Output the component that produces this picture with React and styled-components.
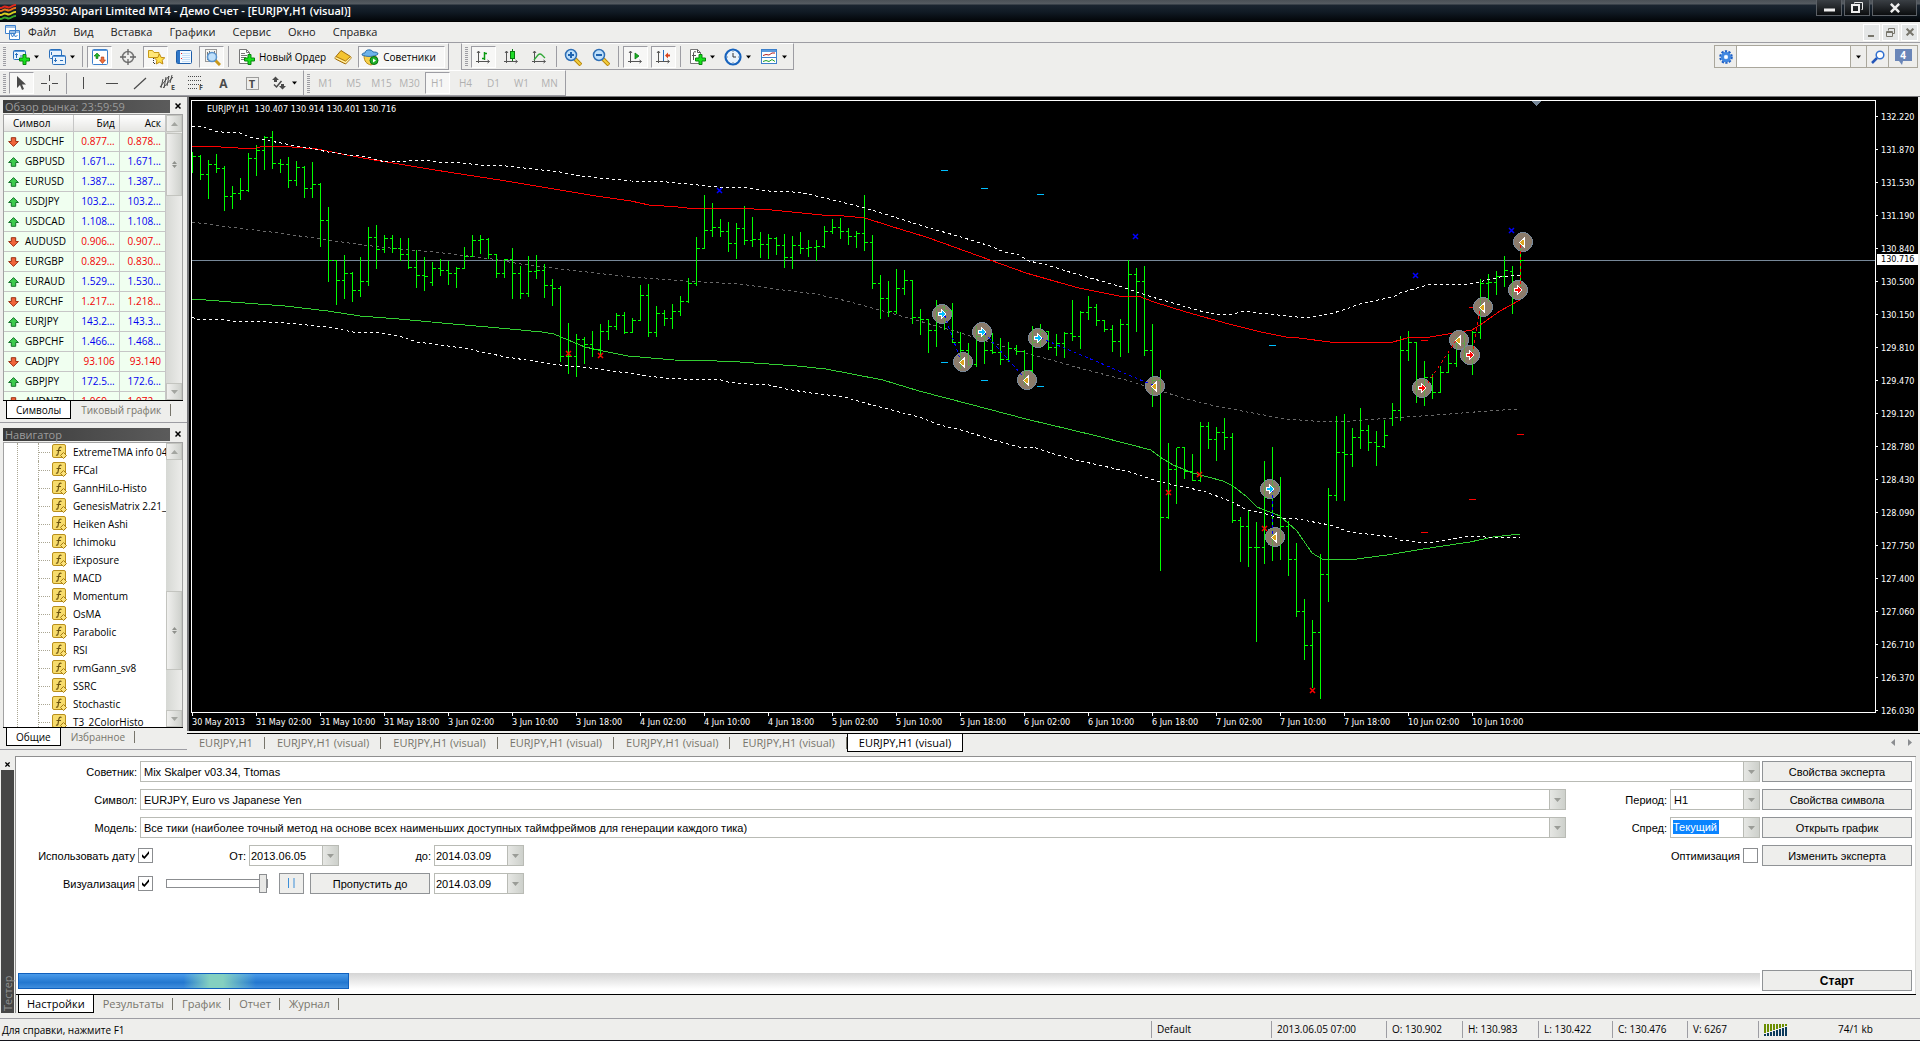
import React from "react";
import styled, { createGlobalStyle } from "styled-components";

const GlobalStyle = createGlobalStyle`
  * {
    box-sizing: border-box;
  }
  body {
    margin: 0;
    background: #eeeeec;
    color: #000;
    font-family: "Open Sans", "Noto Sans", sans-serif;
    font-size: 10px;
  }
  button, input, select {
    font: inherit;
    color: inherit;
    border-radius: 0;
  }
  button {
    padding: 0;
  }
`;

/* ---------- data ---------- */

const menu = ["Файл", "Вид", "Вставка", "Графики", "Сервис", "Окно", "Справка"];

const quotes = [
  ["USDCHF", "0.877...", "0.878...", "down"],
  ["GBPUSD", "1.671...", "1.671...", "up"],
  ["EURUSD", "1.387...", "1.387...", "up"],
  ["USDJPY", "103.2...", "103.2...", "up"],
  ["USDCAD", "1.108...", "1.108...", "up"],
  ["AUDUSD", "0.906...", "0.907...", "down"],
  ["EURGBP", "0.829...", "0.830...", "down"],
  ["EURAUD", "1.529...", "1.530...", "up"],
  ["EURCHF", "1.217...", "1.218...", "down"],
  ["EURJPY", "143.2...", "143.3...", "up"],
  ["GBPCHF", "1.466...", "1.468...", "up"],
  ["CADJPY", "93.106", "93.140", "down"],
  ["GBPJPY", "172.5...", "172.6...", "up"],
  ["AUDNZD", "1.069...", "1.072...", "down"],
];

const indicators = [
  "ExtremeTMA info 04",
  "FFCal",
  "GannHiLo-Histo",
  "GenesisMatrix 2.21_",
  "Heiken Ashi",
  "Ichimoku",
  "iExposure",
  "MACD",
  "Momentum",
  "OsMA",
  "Parabolic",
  "RSI",
  "rvmGann_sv8",
  "SSRC",
  "Stochastic",
  "T3_2ColorHisto",
];

const timeframes = ["M1", "M5", "M15", "M30", "H1", "H4", "D1", "W1", "MN"];

const prices = [
  "132.220", "131.870", "131.530", "131.190", "130.840", "130.500", "130.150",
  "129.810", "129.470", "129.120", "128.780", "128.430", "128.090", "127.750",
  "127.400", "127.060", "126.710", "126.370", "126.030",
];

const times = [
  "30 May 2013", "31 May 02:00", "31 May 10:00", "31 May 18:00",
  "3 Jun 02:00", "3 Jun 10:00", "3 Jun 18:00",
  "4 Jun 02:00", "4 Jun 10:00", "4 Jun 18:00",
  "5 Jun 02:00", "5 Jun 10:00", "5 Jun 18:00",
  "6 Jun 02:00", "6 Jun 10:00", "6 Jun 18:00",
  "7 Jun 02:00", "7 Jun 10:00", "7 Jun 18:00",
  "10 Jun 02:00", "10 Jun 10:00",
];

// high, low, close and, after a gap, open
const bars = [
  [52, 73, 56], [55, 80, 74], [60, 99, 64], [54, 73, 68], [66, 111, 96], [86, 109, 93], [78, 100, 90],
  [53, 92, 58], [45, 76, 50], [36, 70, 37], [31, 69, 63], [59, 73, 64], [57, 88, 80], [61, 86, 67],
  [66, 98, 88], [62, 98, 84], [83, 147, 120], [107, 182, 160], [160, 205, 180], [155, 199, 173],
  [172, 202, 190], [157, 197, 181], [127, 186, 137], [125, 169, 149], [135, 153, 138], [135, 153, 148],
  [138, 161, 154], [138, 169, 167], [150, 188, 175], [157, 191, 176], [162, 186, 168, 182],
  [159, 176, 170], [161, 185, 173], [167, 188, 168], [147, 169, 156], [135, 157, 140], [135, 154, 139],
  [138, 159, 154], [154, 178, 173], [159, 178, 159], [148, 199, 173], [166, 199, 193], [156, 197, 171],
  [155, 179, 170], [164, 198, 185], [179, 206, 188], [186, 262, 256], [223, 274, 256], [234, 277, 239],
  [237, 264, 244], [231, 257, 249], [224, 257, 231], [220, 240, 226], [213, 230, 215], [212, 234, 232],
  [218, 233, 220], [185, 221, 195], [184, 237, 232], [206, 237, 213], [210, 226, 218], [204, 229, 211],
  [196, 216, 201], [178, 203, 183], [137, 186, 148], [95, 149, 130], [103, 137, 127], [119, 137, 131],
  [122, 152, 143], [123, 159, 128], [106, 145, 140], [117, 147, 139], [132, 158, 144], [134, 159, 138],
  [137, 155, 145], [134, 168, 157], [136, 169, 145], [132, 154, 148], [140, 157, 147], [140, 161, 146],
  [126, 148, 131], [119, 134, 127], [118, 139, 131], [128, 145, 136], [131, 148, 133], [95, 151, 142],
  [135, 189, 183], [175, 219, 198], [181, 217, 211], [169, 214, 188], [170, 195, 180], [180, 224, 217],
  [209, 235, 219], [219, 253, 230], [200, 247, 207], [205, 230, 210], [203, 243, 242], [232, 269, 250],
  [243, 266, 264], [226, 267, 236], [230, 264, 250], [233, 254, 252], [238, 265, 259], [242, 262, 248],
  [245, 255, 251], [250, 285, 270], [226, 274, 242], [224, 247, 231], [231, 250, 247], [234, 256, 243],
  [232, 258, 233], [200, 241, 236], [211, 249, 212], [196, 220, 207], [204, 226, 220], [220, 232, 229],
  [225, 252, 241], [219, 257, 224], [160, 253, 174], [168, 232, 181], [166, 256, 250], [224, 307, 280],
  [270, 471, 417], [343, 419, 369], [348, 404, 347], [347, 379, 371], [354, 381, 380], [322, 382, 326],
  [322, 349, 339], [327, 361, 332], [318, 350, 337], [333, 423, 420], [417, 462, 426], [410, 467, 447],
  [422, 542, 447], [361, 464, 397], [347, 461, 386], [377, 460, 426], [421, 476, 459], [443, 517, 511],
  [499, 560, 545], [520, 588, 532], [454, 599, 474], [388, 502, 395], [316, 401, 352], [314, 401, 354],
  [328, 367, 337], [308, 349, 330], [325, 351, 342], [331, 366, 346], [320, 348, 335], [303, 326, 310, 318],
  [236, 321, 250], [231, 261, 242], [242, 303, 288], [261, 306, 277], [274, 299, 292], [266, 293, 272],
  [254, 273, 263], [237, 267, 243], [234, 262, 255], [231, 275, 232], [179, 239, 183], [174, 202, 182],
  [171, 195, 176], [156, 187, 170], [166, 214, 190, 171], [142, 190, 160],
];

const upperBand =
  "0,27 8,26 23,31 30,32 46,32 57,37 68,39 104,46 118,48 136,52 150,54 175,57 193,62 204,61 214,61 232,60 246,62 268,63 289,65 314,66 368,72 389,76 418,79 439,81 475,82 496,84 525,87 548,87 577,91 594,91 616,94 637,99 673,108 702,117 734,127 769,137 798,146 812,152 827,155 837,161 855,165 884,174 927,186 960,197 998,208 1012,212 1023,214 1041,214 1052,211 1066,213 1105,217 1118,217 1138,214 1151,210 1171,203 1201,197 1208,193 1225,188 1235,185 1278,184 1291,181 1308,177 1328,175";
const redLine =
  "0,46 29,47 46,48 64,48 72,46 100,47 125,49 150,54 182,60 207,64 243,70 314,81 404,96 439,101 457,105 486,107 504,109 514,108 552,108 562,109 580,110 630,115 652,116 673,118 698,126 734,137 762,147 798,160 834,173 869,183 887,188 927,196 946,196 962,202 994,212 1037,224 1069,232 1094,237 1107,238 1138,242 1145,242 1201,242 1215,238 1238,237 1280,230 1291,223 1308,211 1328,200";
const middleLine =
  "0,122 29,126 79,132 136,140 171,145 207,149 243,152 300,159 329,164 368,169 439,177 493,181 548,184 591,190 623,194 655,201 698,213 727,221 769,233 816,248 859,260 891,269 934,280 969,291 991,298 1023,306 1066,314 1094,319 1121,321 1158,321 1215,317 1258,314 1295,311 1328,309";
const greenLine =
  "0,199 14,200 39,202 93,206 136,211 168,216 207,219 261,224 307,228 350,232 362,234 376,240 393,247 411,251 436,256 482,260 525,261 548,262 605,266 634,269 691,280 727,291 777,304 834,319 905,336 959,350 968,357 981,365 1001,373 1031,381 1041,386 1055,397 1065,407 1088,416 1105,431 1120,453 1130,459 1138,460 1165,459 1195,455 1225,450 1251,446 1278,442 1301,437 1328,434";
const lowerBand =
  "0,217 7,220 27,219 46,222 57,221 93,223 136,227 161,232 189,233 207,236 225,242 271,248 314,257 368,265 379,266 407,269 421,271 443,274 471,278 489,279 525,279 536,282 555,284 573,284 594,289 619,293 652,297 680,305 727,317 748,325 773,331 798,339 827,347 841,347 862,354 884,360 938,372 968,382 1011,391 1038,401 1055,410 1071,413 1088,418 1105,419 1138,425 1158,432 1201,437 1208,440 1235,443 1255,440 1278,436 1308,438 1328,437";

const entries = [
  [750, 214, "#00bfff"], [790, 232, "#00bfff"], [846, 238, "#00bfff"], [1078, 389, "#00bfff"],
  [1230, 288, "#f00"], [1278, 255, "#f00"], [1326, 190, "#f00"],
];
const exits = [
  [771, 262], [835, 280], [963, 286], [1083, 437], [1267, 240], [1291, 207], [1331, 142],
];
const trades = [
  [752, 215, 768, 260, "#00f"], [792, 233, 832, 278, "#00f"], [848, 238, 960, 285, "#00f"],
  [1080, 389, 1080, 437, "#00f"], [1232, 288, 1264, 240, "#f00"], [1280, 255, 1288, 207, "#f00"],
  [1328, 190, 1328, 142, "#f00"],
];
const levels = [
  [752, 70, "#00bfff"], [792, 88, "#00bfff"], [848, 94, "#00bfff"], [752, 262, "#00bfff"],
  [792, 280, "#00bfff"], [848, 286, "#00bfff"], [1080, 245, "#00bfff"],
  [1232, 240, "#f00"], [1280, 207, "#f00"], [1328, 334, "#f00"], [1280, 399, "#f00"], [1232, 432, "#f00"],
];
const crosses = [
  [527, 89, "#00f"], [943, 135, "#00f"], [1223, 174, "#00f"], [1319, 129, "#00f"],
  [376, 252, "#f00"], [408, 254, "#f00"], [976, 391, "#f00"], [1007, 373, "#f00"],
  [1072, 427, "#f00"], [1120, 589, "#f00"],
];

const STEP = 8;

const barPath = bars
  .map(([high, low, close, open], i) => {
    const x = i * STEP + 0.5;
    const start = open ?? (i > 0 ? bars[i - 1][2] : null);
    const left = start === null ? "" : `M${x - 3} ${start + 0.5}H${x}`;
    return `${left}M${x} ${high}V${low}M${x} ${close + 0.5}H${x + 3}`;
  })
  .join("");

/* ---------- icons ---------- */

const Svg = ({ size = 18, children }) => (
  <svg width={size} height={size} viewBox="0 0 18 18" fill="none" aria-hidden="true">
    {children}
  </svg>
);

const Plus = ({ x = 7, y = 6 }) => (
  <path
    transform={`translate(${x} ${y})`}
    d="M4 .5h3v3.500h3.500v3H7v3.500H4V7H.5V4H4z"
    fill="#18e01c"
    stroke="#07860d"
  />
);

const Axes = () => (
  <path d="M4.500 3v12M2 13.500h13M3 5l1.500-2L6 5M13.500 12l2 1.500-2 1.500" stroke="#555" />
);

const Window = ({ x, y, w = 12, h = 9 }) => (
  <g>
    <rect x={x + 0.5} y={y + 0.5} width={w} height={h} rx="1" fill="#eaf4fd" stroke="#2a6fba" />
    <path d={`M${x + 1} ${y + 1.5}h${w - 1}`} stroke="#5b9add" />
  </g>
);

const Magnifier = ({ minus, plus }) => (
  <Svg>
    <path d="M11 11l6 6" stroke="#b8860b" strokeWidth="4" />
    <path d="M11 11l5.500 5.500" stroke="#f3cf3e" strokeWidth="2" />
    <circle cx="7" cy="7" r="5.500" fill="#bfe0fb" stroke="#2f6fb5" strokeWidth="1.500" />
    {(minus || plus) && <path d="M4 7h6" stroke="#1f64b0" strokeWidth="2" />}
    {plus && <path d="M7 4v6" stroke="#1f64b0" strokeWidth="2" />}
  </Svg>
);

const icons = {
  newChart: (
    <Svg>
      <Window x={1} y={2} />
      <path d="M4.500 5v5M3 6.500h3M8 8h3" stroke="#2a6fba" />
      <Plus />
    </Svg>
  ),
  profiles: (
    <Svg>
      <Window x={1} y={1} w={12} h={9} />
      <Window x={4} y={7} w={13} h={9} />
      <path d="M3.500 4v3M7.500 10v4M6 12.500h3M12 12.500h3" stroke="#2a6fba" />
    </Svg>
  ),
  marketWatch: (
    <Svg>
      <rect x="1.500" y="1.500" width="15" height="15" rx="1" fill="#fff" stroke="#3c80cc" />
      <path d="M2 2.500h14" stroke="#5b9add" />
      <path d="M3 8l3-3 3 3H7v2.500H5V8z" fill="#22b52a" stroke="#08730e" strokeWidth=".6" />
      <path d="M8.500 12l3 3.500 3-3.500h-1.700V9h-2.600v3z" fill="#f0703c" stroke="#a8300c" strokeWidth=".6" />
    </Svg>
  ),
  dataWindow: (
    <Svg>
      <circle cx="9" cy="9" r="5.500" stroke="#777" strokeWidth="1.500" />
      <path d="M9 1v6M9 11v6M1 9h6M11 9h6" stroke="#666" strokeWidth="1.300" />
    </Svg>
  ),
  navigator: (
    <Svg>
      <path d="M1.500 9.500v-7h4l1.500 2h5v5z" fill="#ffe678" stroke="#c79a18" />
      <path d="M6.500 10v5.500h3" stroke="#333" strokeDasharray="1 1" />
      <path d="M12.500 6l1.600 3.400 3.700.4-2.700 2.500.8 3.700-3.400-1.800L9.200 16l.7-3.700-2.700-2.500 3.700-.4z" fill="#ffe04a" stroke="#c08a10" />
    </Svg>
  ),
  terminal: (
    <Svg>
      <rect x="1.500" y="2.500" width="15" height="13" rx="1" fill="#f4faff" stroke="#1d5da8" />
      <path d="M3.500 3v12" stroke="#2f77c8" strokeWidth="3" />
      <path d="M7 5.500h8M7 7.500h8M7 9.500h8M7 11.500h8M7 13.500h8" stroke="#c6dff8" />
      <path d="M6 5.500h1M6 10.500h1" stroke="#e22" />
    </Svg>
  ),
  tester: (
    <Svg>
      <rect x="2.500" y="1.500" width="11" height="12" fill="#f4f4f0" stroke="#999" />
      <path d="M4.500 4v8M6.500 3v6M11.500 3v4" stroke="#777" />
      <path d="M12 12l5 5" stroke="#c8981c" strokeWidth="3" />
      <circle cx="9" cy="9" r="4.500" fill="#bfe0fb" stroke="#5a93cc" strokeWidth="1.500" />
    </Svg>
  ),
  newOrder: (
    <Svg>
      <path d="M2.500 1.500h7l3 3v11h-10z" fill="#fff" stroke="#777" />
      <path d="M9.500 1.500v3h3M4 5.500h4M4 7.500h6M4 9.500h5M4 11.500h3" stroke="#777" />
      <Plus />
    </Svg>
  ),
  metaEditor: (
    <Svg>
      <path d="M7 2.500l9.500 6c.8.600.8 1.600 0 2.300l-5 5.200L1.500 11c-.6-.5-.6-1.300 0-2z" fill="#f4c431" stroke="#a06c10" />
      <path d="M1.500 9.500l10 5 5-5" stroke="#fff1b0" strokeWidth="1.200" />
      <path d="M2 8.500l9.500 4.500 4.500-4" stroke="#b07c18" />
    </Svg>
  ),
  experts: (
    <Svg>
      <path d="M3 7c0 7 3 9 7 10 3-1 5-4 5-9z" fill="#f7d04c" stroke="#b98a14" />
      <path d="M1 7c0-2 2-2 3-2 0-4 7-4 8-1 2 0 5 0 5 2-3 3-12 3-16 1z" fill="#6db3ea" stroke="#2c6ea8" />
      <circle cx="13" cy="12.500" r="4" fill="#20b22a" stroke="#0a7012" />
      <path d="M12 10.500v4l3-2z" fill="#fff" />
    </Svg>
  ),
  barChart: (
    <Svg>
      <Axes />
      <path d="M10.500 4v8M8 10.500h2.500M10.500 5.500H13" stroke="#0a9a10" strokeWidth="1.500" />
    </Svg>
  ),
  candles: (
    <Svg>
      <Axes />
      <path d="M10.500 1v12" stroke="#0a7a10" />
      <rect x="8.500" y="3.500" width="4" height="7" fill="#1fdc28" stroke="#0a7a10" />
    </Svg>
  ),
  lineChart: (
    <Svg>
      <Axes />
      <path d="M4 12l4-5c2-2 3-1 4 0l3 3" stroke="#2fa836" strokeWidth="1.300" />
    </Svg>
  ),
  zoomIn: <Magnifier plus />,
  zoomOut: <Magnifier minus />,
  autoScroll: (
    <Svg>
      <Axes />
      <path d="M9 5v6l4-3z" fill="#16b020" stroke="#0a7a10" strokeWidth=".8" />
    </Svg>
  ),
  chartShift: (
    <Svg>
      <Axes />
      <path d="M9.500 2v11" stroke="#2a6fba" />
      <path d="M11 7.500l3-3v2h2v2h-2v2z" fill="#d8431a" />
    </Svg>
  ),
  indicators: (
    <Svg>
      <path d="M2.500 1.500h7l3 3v11h-10z" fill="#fff" stroke="#777" />
      <path d="M9.500 1.500v3h3M8 4c-2-1-2.500 0-2.500 2v6M4 7.500h4" stroke="#555" />
      <Plus />
    </Svg>
  ),
  periods: (
    <Svg>
      <circle cx="9" cy="9" r="7.500" fill="#e9f3fc" stroke="#1763bd" strokeWidth="2.200" />
      <path d="M9 5v4h3" stroke="#333" />
      <path d="M9 3v1M9 14v1M3 9h1M14 9h1" stroke="#7a8894" />
    </Svg>
  ),
  templates: (
    <Svg>
      <rect x="1.500" y="1.500" width="15" height="14" fill="#fff" stroke="#3c80cc" />
      <path d="M2 3h14" stroke="#5b9add" strokeWidth="2" />
      <path d="M2 9.500h14" stroke="#3c80cc" />
      <path d="M3 7.500l3-1 3 .5 3-2h3" stroke="#b02020" />
      <path d="M3 13.500l3-1 3 1 3-2 3 2" stroke="#1fa028" />
    </Svg>
  ),
  cursor: (
    <Svg>
      <path d="M4 2v12l3-3 2 5 2-1-2-4.500h4z" fill="#4a4a4a" />
    </Svg>
  ),
  crosshair: (
    <Svg>
      <path d="M8.500 1v6M8.500 11v6M0 9.500h6M11 9.500h6" stroke="#4a4a4a" shapeRendering="crispEdges" />
    </Svg>
  ),
  vline: (
    <Svg>
      <path d="M8.500 3v12" stroke="#4a4a4a" />
    </Svg>
  ),
  hline: (
    <Svg>
      <path d="M3 9.500h12" stroke="#4a4a4a" />
    </Svg>
  ),
  trend: (
    <Svg>
      <path d="M3 15L15 4" stroke="#4a4a4a" strokeWidth="1.200" />
    </Svg>
  ),
  shapes: (
    <Svg>
      <path d="M2 6l3.500-3.500L9 6H7v2H4V6zM9 12h2v-2h3v2h2l-3.500 3.500z" fill="#4a4a4a" />
      <path d="M4 10.500l2.500 2.500 5-6" stroke="#4a4a4a" strokeWidth="1.500" />
    </Svg>
  ),
};

/* small letters beside the strokes are live text */
const ChannelIcon = () => (
  <svg width="18" height="20" viewBox="0 0 18 20" aria-hidden="true">
    <path d="M1 14L10 3M4 15L14 4M4 6l-2 9M7 4L5 15M10 3L8 13M13 2l-2 8" stroke="#4a4a4a" fill="none" />
    <text x="12" y="17" fontSize="7" fontWeight="700" fill="#4a4a4a">E</text>
  </svg>
);

const FiboIcon = () => (
  <svg width="18" height="20" viewBox="0 0 18 20" aria-hidden="true">
    <path d="M1 3.500h14M1 7.500h14M1 11.500h14M1 15.500h9" stroke="#4a4a4a" strokeDasharray="1 1" />
    <text x="12" y="17" fontSize="7" fontWeight="700" fill="#4a4a4a">F</text>
  </svg>
);

const LabelIcon = () => (
  <svg width="18" height="18" viewBox="0 0 18 18" aria-hidden="true">
    <rect x="3.500" y="3.500" width="12" height="12" fill="none" stroke="#4a4a4a" strokeDasharray="1 1" />
    <text x="9" y="14" textAnchor="middle" fontSize="11" fontWeight="700" fill="#4a4a4a">T</text>
  </svg>
);

const DownTriangle = ({ color = "#000", width = 5 }) => (
  <svg width={width} height="4" viewBox="0 0 7 4" aria-hidden="true">
    <path d="M0 0h7L3.500 4z" fill={color} />
  </svg>
);

const CloseGlyph = ({ size = 6, color = "#000", weight = 2 }) => (
  <svg width={size} height={size} viewBox="0 0 6 6" aria-hidden="true">
    <path d="M.5 .5l5 5M5.500 .5l-5 5" stroke={color} strokeWidth={weight * 0.75} />
  </svg>
);

const QuoteArrow = ({ dir }) => (
  <svg width="11" height="10" viewBox="0 0 11 10" aria-hidden="true">
    {dir === "up" ? (
      <path d="M5.500 .6L10.400 5.500H7.700v3.800H3.300V5.500H.6z" fill="#3ccb4c" stroke="#14712a" />
    ) : (
      <path d="M5.500 9.400L.6 4.500h2.700V.7h4.400v3.800h2.700z" fill="#f0653a" stroke="#9c2f12" />
    )}
  </svg>
);

const FunctionIcon = () => (
  <svg width="16" height="16" viewBox="0 0 16 16" aria-hidden="true">
    <rect x=".5" y=".5" width="13" height="13" rx="1.500" fill="#f7dc6c" stroke="#b98f1c" />
    <path d="M9.500 3.500c-2-1-2.500.5-2.800 2.500L6 10c-.2 1-.8 1.500-2 1M4.500 6.500h4.500" stroke="#6b5210" strokeWidth="1.200" fill="none" />
    <path d="M11.500 8.500l3 3-3 3-3-3z" fill="#fbe27a" stroke="#a67c12" />
  </svg>
);

/* ---------- layout ---------- */

const Page = styled.div`
  display: flex;
  flex-direction: column;
  height: 100vh;
  overflow: hidden;
  border-bottom: 1px solid #15151c;
`;

const TitleBar = styled.header`
  display: flex;
  align-items: center;
  gap: 5px;
  height: 22px;
  flex-shrink: 0;
  border-bottom: 1px solid #000;
  background: linear-gradient(#4a5056 0, #565c62 4px, #1b2530 5px, #101a24 12px, #04080c 20px);
  color: #fff;
  h1 {
    flex: 1;
    margin: 0;
    font-size: 11px;
    font-weight: 600;
    line-height: 20px;
  }
`;

const WindowButtons = styled.div`
  display: flex;
  align-self: flex-start;
  gap: 2px;
  margin-right: 3px;
`;

const WindowButton = styled.button`
  width: ${(p) => (p.$wide ? "45px" : "26px")};
  height: 16px;
  border: 1px solid #5b6066;
  border-top: 0;
  background: linear-gradient(#3a3f44, #0b0d0f);
  display: grid;
  place-items: center;
`;

const MenuBar = styled.nav`
  display: flex;
  align-items: center;
  height: 21px;
  flex-shrink: 0;
  padding: 0 2px 0 5px;
  border-bottom: 1px solid #9d9da3;
  ul {
    display: flex;
    flex: 1;
    gap: 17px;
    margin: 0;
    padding: 0 0 0 8px;
    list-style: none;
  }
  a {
    color: #222;
    font-size: 11px;
    line-height: 14px;
    text-decoration: none;
  }
`;

const MdiButton = styled.button`
  width: 17px;
  height: 17px;
  margin-left: 2px;
  border: 1px solid #fff;
  background: #e4e6e6;
  display: grid;
  place-items: center;
`;

const ToolRow = styled.div`
  display: flex;
  align-items: stretch;
  height: 27px;
  flex-shrink: 0;
  border-bottom: ${(p) => (p.$last ? "1px solid #77777a" : "0")};
`;

const ToolGroup = styled.div`
  display: flex;
  align-items: center;
  gap: 3px;
  padding: 0 3px;
  border-top: 1px solid #fff;
  border-right: 1px solid #9d9da3;
  border-bottom: 1px solid #9d9da3;
  border-left: ${(p) => (p.$divided ? "1px solid #9d9da3" : "0")};
  margin-left: ${(p) => (p.$divided ? "12px" : "0")};
`;

const Grip = styled.i`
  width: 3px;
  height: 19px;
  background: repeating-linear-gradient(#9d9da3 0 1px, transparent 1px 2px);
`;

const Separator = styled.i`
  width: 1px;
  height: 21px;
  margin: 0 1px;
  background: #9d9da3;
`;

const ToolButton = styled.button`
  display: flex;
  align-items: center;
  justify-content: center;
  gap: 4px;
  min-width: 25px;
  height: 22px;
  padding: 0;
  border: 1px solid;
  border-color: ${(p) => (p.$on ? "#9d9da3 #fff #fff #9d9da3" : "transparent")};
  background: ${(p) => (p.$on ? "#f7f7f6" : "none")};
  color: ${(p) => (p.$muted ? "#b0b0b0" : "#000")};
`;

const LabelButton = styled(ToolButton)`
  padding: ${(p) => (p.$on ? "0 8px 0 2px" : "0 0 0 3px")};
`;

const DropButton = styled(ToolButton)`
  min-width: 33px;
`;

const Letter = styled.b`
  color: #4a4a4a;
  font-size: 12px;
`;

const SearchBox = styled.form`
  display: flex;
  margin: 2px 2px 0 auto;
  height: 23px;
  border: 1px solid #aaa79c;
  background: #fff;
  input {
    width: 113px;
    border: 0;
    outline: 0;
  }
  button {
    display: grid;
    place-items: center;
    border: 0;
    border-left: 1px solid #aaa79c;
    background: #eeeeec;
  }
  button:first-child {
    border-left: 0;
    border-right: 1px solid #aaa79c;
  }
`;

const SearchButton = styled.button`
  width: ${(p) => p.$width}px;
`;

const Main = styled.main`
  display: flex;
  flex: 1;
  min-height: 0;
`;

const Side = styled.aside`
  display: flex;
  flex-direction: column;
  gap: 2px;
  width: 187px;
  flex-shrink: 0;
  padding-bottom: 2px;
`;

const Dock = styled.section`
  display: flex;
  flex-direction: column;
  min-height: 0;
  flex: ${(p) => (p.$grow ? "1" : "0 0 326px")};
  padding: 2px 4px 3px 3px;
  border-bottom: 1px solid #9d9da3;
`;

const DockHeader = styled.div`
  display: flex;
  justify-content: space-between;
  align-items: center;
  height: 14px;
  margin-bottom: 1px;
  flex-shrink: 0;
  h2 {
    width: 167px;
    margin: 0;
    padding-left: 2px;
    background: linear-gradient(90deg, #3b3b3b, #5b5b5b);
    color: #9c9c9c;
    font-size: 11px;
    font-weight: 400;
    line-height: 13px;
    white-space: nowrap;
  }
  button {
    width: 11px;
    height: 12px;
    border: 0;
    background: none;
    display: grid;
    place-items: center;
  }
`;

const DockBody = styled.div`
  display: flex;
  flex: 1;
  min-height: 0;
  border: 1px solid #a2a2a2;
  border-bottom: 0;
  background: #fff;
  overflow: hidden;
`;

const Quotes = styled.table`
  width: 162px;
  align-self: flex-start;
  table-layout: fixed;
  border-collapse: collapse;
  background: #f0fff0;
  white-space: nowrap;
  th, td {
    height: 20px;
    padding: 0 4px;
    border: 1px solid #c6c6c6;
    font-weight: 400;
    text-align: right;
    overflow: hidden;
    line-height: 16px;
  }
  th {
    height: 16px;
    background: linear-gradient(#fff, #e6e6e3);
    border-top: 0;
    line-height: 14px;
  }
  th:first-child, td:first-child {
    width: 69px;
    border-left: 0;
    text-align: left;
  }
  th:first-child {
    padding-left: 9px;
  }
  td svg {
    margin-right: 6px;
    vertical-align: -2px;
  }
`;

const QuoteRow = styled.tr`
  td {
    color: ${(p) => (p.$dir === "up" ? "#0000f0" : "#f00000")};
  }
  td:first-child {
    color: #000;
  }
`;

const ScrollTrack = styled.div`
  display: flex;
  flex-direction: column;
  width: 16px;
  flex-shrink: 0;
  background: linear-gradient(90deg, #d6d8d4, #ececea);
`;

const ScrollPart = styled.span`
  display: grid;
  place-items: center;
  height: ${(p) => p.$height}px;
  margin-top: ${(p) => (p.$end ? "auto" : p.$gap ? `${p.$gap}px` : "0")};
  border: 1px solid #c3c4bf;
  background: linear-gradient(90deg, #f0f0ee, #cfd1cd);
`;

const Tree = styled.ul`
  flex: 1;
  min-width: 0;
  margin: 0 0 0 13px;
  padding: 0;
  border-left: 1px dotted #aaa693;
  list-style: none;
  overflow: hidden;
`;

const TreeItem = styled.li`
  display: flex;
  align-items: center;
  gap: 5px;
  height: 18px;
  margin-left: 20px;
  border-left: 1px dotted #aaa693;
  white-space: nowrap;
  svg {
    flex-shrink: 0;
  }
  &::before {
    content: "";
    width: 11px;
    margin-right: -3px;
    flex-shrink: 0;
    border-top: 1px dotted #aaa693;
  }
`;

const Tabs = styled.div`
  display: flex;
  flex-shrink: 0;
  height: 19px;
  padding-left: ${(p) => p.$inset || 0}px;
  border-top: 1px solid #000;
  font-size: ${(p) => (p.$small ? "10px" : "11px")};
`;

const Tab = styled.button`
  position: relative;
  height: 18px;
  padding: 0 ${(p) => p.$pad || 10}px;
  border: 0;
  background: none;
  color: #77756b;
  line-height: 16px;
  white-space: nowrap;
  &::after {
    content: "";
    position: absolute;
    right: 0;
    top: 3px;
    height: 12px;
    border-right: 1px solid #77756b;
  }
  &[aria-selected="true"] {
    padding: 0 ${(p) => (p.$pad || 10) - 1}px;
    border: 1px solid #000;
    border-top: 0;
    background: #fff;
    color: #000;
  }
  &[aria-selected="true"]::after {
    display: none;
  }
`;

/* ---------- chart ---------- */

const ChartPane = styled.section`
  display: flex;
  flex-direction: column;
  flex: 1;
  min-width: 0;
`;

const ChartGrid = styled.div`
  display: grid;
  grid-template: minmax(0, 1fr) 18px / minmax(0, 1fr) 42px;
  flex: 1;
  min-height: 0;
  margin-right: 2px;
  margin-bottom: 2px;
  padding: 3px 0 0 2px;
  border-left: 2px solid #77777a;
  background: #000;
  color: #fff;
  font-family: "DejaVu Sans Condensed", "DejaVu Sans", sans-serif;
  font-size: 9px;
`;

const Plot = styled.div`
  position: relative;
  border: 1px solid #fff;
  overflow: hidden;
  svg {
    display: block;
    width: 100%;
    height: 100%;
  }
`;

const PlotTitle = styled.p`
  position: absolute;
  left: 15px;
  top: 2px;
  margin: 0;
  line-height: 12px;
  white-space: pre;
`;

const PriceScale = styled.div`
  position: relative;
  ol {
    margin: 0;
    padding: 0;
    list-style: none;
  }
  li {
    display: flex;
    align-items: center;
    gap: 3px;
    height: 33px;
  }
  li::before {
    content: "";
    width: 2px;
    height: 1px;
    background: #fff;
  }
`;

const CurrentPrice = styled.output`
  position: absolute;
  top: 154px;
  left: 1px;
  right: 0;
  padding-left: 4px;
  background: #fff;
  color: #000;
  line-height: 11px;
`;

const TimeScale = styled.ol`
  display: flex;
  margin: 0;
  padding: 0 0 0 1px;
  list-style: none;
  overflow: hidden;
  li {
    width: 64px;
    flex-shrink: 0;
    line-height: 12px;
    white-space: nowrap;
  }
  li::before {
    content: "";
    display: block;
    width: 1px;
    height: 3px;
    background: #fff;
  }
`;

const ChartTabs = styled(Tabs)`
  padding-right: 4px;
  svg {
    margin: 5px 4px 0 9px;
  }
  svg:first-of-type {
    margin-left: auto;
  }
`;

/* ---------- tester ---------- */

const Tester = styled.section`
  display: flex;
  flex-shrink: 0;
  margin-top: 3px;
  padding-right: 4px;
  border-top: 1px solid #eeeeec;
  border-bottom: 5px solid #eeeeec;
`;

const TesterStrip = styled.div`
  display: flex;
  flex-direction: column;
  width: 15px;
  padding: 0 1px;
  button {
    height: 14px;
    border: 0;
    background: none;
    line-height: 10px;
  }
  h2 {
    flex: 1;
    margin: 0;
    background: #464646;
    color: #929292;
    font-size: 11px;
    font-weight: 400;
    line-height: 13px;
    writing-mode: vertical-rl;
    transform: rotate(180deg);
    padding-top: 2px;
  }
`;

const TesterBody = styled.div`
  flex: 1;
  min-width: 0;
  border-top: 1px solid #8f8f8f;
  border-left: 1px solid #8f8f8f;
`;

const TesterForm = styled.form`
  padding: 4px 2px 3px 2px;
  border-right: 1px solid #dcdcda;
  background: #fff;
  font-family: "Liberation Sans", Arial, sans-serif;
  font-size: 11px;
`;

const FormRow = styled.div`
  display: flex;
  align-items: center;
  height: 21px;
  margin-bottom: 7px;
  padding-right: 1px;
`;

const FieldLabel = styled.label`
  width: ${(p) => p.$width}px;
  flex-shrink: 0;
  padding-right: 3px;
  text-align: right;
  white-space: nowrap;
`;

const Combo = styled.div`
  display: flex;
  align-items: stretch;
  height: 21px;
  flex: ${(p) => (p.$width ? `0 0 ${p.$width}px` : "1")};
  min-width: 0;
  border: 1px solid #b9bbb5;
  background: #fff;
  select, input {
    flex: 1;
    min-width: 0;
    padding: 0 3px;
    border: 0;
    outline: 0;
    appearance: none;
    background: none;
  }
  input {
    padding: 0 1px;
  }
`;

const SelectedText = styled.div`
  flex: 1;
  padding: 2px;
  select {
    width: 46px;
    height: 14px;
    padding: 0;
    background: #0a84ff;
    color: #fff;
    line-height: 13px;
  }
`;

const ComboArrow = styled.span`
  display: grid;
  place-items: center;
  width: 16px;
  border-left: 1px solid #b9bbb5;
  background: linear-gradient(90deg, #e6e7e4, #cdd0cb);
`;

const Check = styled.input`
  position: relative;
  width: 15px;
  height: 15px;
  margin: 0;
  flex-shrink: 0;
  appearance: none;
  border: 1px solid #8b8d90;
  background: #fff;
  &:checked::after {
    content: "";
    position: absolute;
    left: 3px;
    top: 2px;
    width: 7px;
    height: 8px;
    background: #000;
    clip-path: polygon(0 40%, 35% 70%, 100% 0, 100% 35%, 35% 100%, 0 75%);
  }
`;

const Slider = styled.input`
  width: 102px;
  height: 19px;
  margin: 0 11px 0 13px;
  appearance: none;
  background: none;
  &::-webkit-slider-runnable-track {
    height: 9px;
    border: 1px solid #8b8d90;
    background: #fff;
  }
  &::-webkit-slider-thumb {
    appearance: none;
    width: 8px;
    height: 19px;
    margin-top: -6px;
    border: 1px solid #8b8d90;
    background: #e8e8e6;
  }
`;

const PushButton = styled.button`
  width: ${(p) => p.$width || 150}px;
  height: 21px;
  flex-shrink: 0;
  border: 1px solid #909396;
  background: #eeeeec;
  font-weight: ${(p) => (p.$strong ? "700" : "400")};
  font-size: ${(p) => (p.$strong ? "12px" : "11px")};
`;

const Spacer = styled.div`
  flex: ${(p) => (p.$width === undefined ? "1" : `0 0 ${p.$width}px`)};
`;

const RunRow = styled(FormRow)`
  margin: 76px 0 0;
  gap: 2px;
`;

const Progress = styled.div`
  flex: 1;
  height: 16px;
  background: linear-gradient(#d4d4d4, #fff);
`;

const ProgressFill = styled.div`
  height: 100%;
  border: 1px solid #1060bd;
  background:
    linear-gradient(90deg, transparent 50%, #84d0c0 58%, #84d0c0 62%, transparent 72%),
    linear-gradient(#4a9bea, #2377cf 60%, #3f8ede);
`;

const StatusBar = styled.footer`
  display: flex;
  align-items: center;
  height: 22px;
  flex-shrink: 0;
  padding-left: 2px;
  border-top: 1px solid #9d9da3;
  p {
    flex: 1;
    margin: 0;
  }
`;

const StatusCell = styled.span`
  width: ${(p) => p.$width}px;
  padding-left: 5px;
  border-left: 1px solid #9d9da3;
  line-height: 17px;
`;

const Traffic = styled(StatusCell)`
  display: flex;
  align-items: center;
  gap: 50px;
`;

/* ---------- components ---------- */

const Tool = ({ icon, label, title, drop, on, children }) => {
  const Base = drop ? DropButton : label ? LabelButton : ToolButton;
  return (
    <Base type="button" aria-label={label ? undefined : title} $on={on}>
      {children || icons[icon]}
      {label}
      {drop && <DownTriangle />}
    </Base>
  );
};

const TabStrip = ({ items, active, pad, ...rest }) => (
  <Tabs role="tablist" {...rest}>
    {items.map((name, i) => (
      <Tab key={name} role="tab" $pad={pad} aria-selected={i === active}>
        {name}
      </Tab>
    ))}
  </Tabs>
);

const ScrollBar = ({ gap, thumb }) => (
  <ScrollTrack aria-hidden="true">
    <ScrollPart $height={17}>
      <svg width="7" height="4" viewBox="0 0 7 4"><path d="M0 4h7L3.500 0z" fill="#a3a5a0" /></svg>
    </ScrollPart>
    <ScrollPart $height={thumb} $gap={gap}>
      <svg width="5" height="7" viewBox="0 0 5 7"><path d="M0 3h5L2.500 0zM0 4h5L2.500 7z" fill="#8f918c" /></svg>
    </ScrollPart>
    <ScrollPart $height={17} $end>
      <DownTriangle color="#a3a5a0" width={7} />
    </ScrollPart>
  </ScrollTrack>
);

const ComboBox = ({ id, value, width, date, selected }) => {
  const list = (
    <select id={id} defaultValue={value}>
      <option>{value}</option>
    </select>
  );
  return (
    <Combo $width={width}>
      {date && <input id={id} type="text" aria-label="Дата" defaultValue={value} />}
      {selected && <SelectedText>{list}</SelectedText>}
      {!date && !selected && list}
      <ComboArrow><DownTriangle color="#9a9c97" width={7} /></ComboArrow>
    </Combo>
  );
};

const MarketWatch = () => (
  <Dock>
    <DockHeader>
      <h2>Обзор рынка: 23:59:59</h2>
      <button aria-label="Закрыть"><CloseGlyph /></button>
    </DockHeader>
    <DockBody>
      <Quotes>
        <thead>
          <tr>
            <th>Символ</th>
            <th>Бид</th>
            <th>Аск</th>
          </tr>
        </thead>
        <tbody>
          {quotes.map(([symbol, bid, ask, dir]) => (
            <QuoteRow key={symbol} $dir={dir}>
              <td><QuoteArrow dir={dir} />{symbol}</td>
              <td>{bid}</td>
              <td>{ask}</td>
            </QuoteRow>
          ))}
        </tbody>
      </Quotes>
      <ScrollBar gap={1} thumb={63} />
    </DockBody>
    <TabStrip items={["Символы", "Тиковый график"]} active={0} $inset={3} $small />
  </Dock>
);

const Navigator = () => (
  <Dock $grow>
    <DockHeader>
      <h2>Навигатор</h2>
      <button aria-label="Закрыть"><CloseGlyph /></button>
    </DockHeader>
    <DockBody>
      <Tree>
        {indicators.map((name) => (
          <TreeItem key={name}>
            <FunctionIcon />
            {name}
          </TreeItem>
        ))}
      </Tree>
      <ScrollBar gap={131} thumb={79} />
    </DockBody>
    <TabStrip items={["Общие", "Избранное"]} active={0} $inset={3} $small />
  </Dock>
);

const Chart = () => (
  <svg shapeRendering="crispEdges" fill="none" role="img" aria-label="EURJPY,H1">
    <g transform="translate(0 -1)">
      <path d="M0 160.500H4000" stroke="#778899" />
      <path d="M1340 1h9l-4.500 5z" fill="#778899" />
      <polyline points={middleLine} stroke="#696969" strokeDasharray="3 3" />
      <polyline points={greenLine} stroke="#32cd32" />
      <path d={barPath} stroke="#0f0" />
      <polyline points={redLine} stroke="#f00" />
      <polyline points={upperBand} stroke="#fff" strokeDasharray="3 3" />
      <polyline points={lowerBand} stroke="#fff" strokeDasharray="3 3" />
      {levels.map(([x, y, color]) => (
        <path key={`${x}-${y}`} d={`M${x - 3} ${y + 0.5}h7`} stroke={color} />
      ))}
      {crosses.map(([x, y, color]) => (
        <path
          key={`${x}-${y}`}
          d={`M${x - 2} ${y - 1}l5 5M${x + 3} ${y - 1}l-5 5`}
          stroke={color}
          strokeWidth="1.500"
          shapeRendering="auto"
        />
      ))}
      {[...entries, ...exits].map(([x, y]) => (
        <circle key={`${x}-${y}`} cx={x} cy={y} r="9.500" fill="#8b7b6b" stroke="#778899" />
      ))}
      <path d={barPath} stroke="#0f0" opacity="0.3" />
      {trades.map(([x1, y1, x2, y2, color]) => (
        <path key={`${x1}-${y1}`} d={`M${x1 + 0.5} ${y1}L${x2 + 0.5} ${y2}`} stroke={color} strokeDasharray="3 3" />
      ))}
      {entries.map(([x, y, color]) => (
        <path
          key={`${x}-${y}`}
          d={`M${x - 3.5} ${y - 1.5}h3v-3l4.500 4.500l-4.500 4.500v-3h-3z`}
          fill={color}
          stroke="#fff"
        />
      ))}
      {exits.map(([x, y]) => (
        <path
          key={`${x}-${y}`}
          d={`M${x + 1.5} ${y - 4}v9l-5-4.500z`}
          fill="#daa520"
          stroke="#fff"
        />
      ))}
    </g>
  </svg>
);

const ChartWindow = () => (
  <ChartPane>
    <ChartGrid>
      <Plot>
        <Chart />
        <PlotTitle>EURJPY,H1  130.407 130.914 130.401 130.716</PlotTitle>
      </Plot>
      <PriceScale>
        <ol>
          {prices.map((price) => (
            <li key={price}>{price}</li>
          ))}
        </ol>
        <CurrentPrice>130.716</CurrentPrice>
      </PriceScale>
      <TimeScale>
        {times.map((time) => (
          <li key={time}>{time}</li>
        ))}
      </TimeScale>
    </ChartGrid>
    <ChartTabs role="tablist">
      {["EURJPY,H1", ...Array(6).fill("EURJPY,H1 (visual)")].map((name, i) => (
        <Tab key={i} role="tab" $pad={12} aria-selected={i === 6}>
          {name}
        </Tab>
      ))}
      <svg width="4" height="7" viewBox="0 0 4 7"><path d="M4 0v7L0 3.500z" fill="#8b8d90" /></svg>
      <svg width="4" height="7" viewBox="0 0 4 7"><path d="M0 0v7l4-3.500z" fill="#8b8d90" /></svg>
    </ChartTabs>
  </ChartPane>
);

const StrategyTester = () => (
  <Tester>
    <TesterStrip>
      <button aria-label="Закрыть"><CloseGlyph size={5} /></button>
      <h2>Тестер</h2>
    </TesterStrip>
    <TesterBody>
      <TesterForm>
        <FormRow>
          <FieldLabel $width={122} htmlFor="expert">Советник:</FieldLabel>
          <ComboBox id="expert" value="Mix Skalper v03.34, Ttomas" />
          <Spacer $width={2} />
          <PushButton type="button">Свойства эксперта</PushButton>
        </FormRow>
        <FormRow>
          <FieldLabel $width={122} htmlFor="symbol">Символ:</FieldLabel>
          <ComboBox id="symbol" value="EURJPY, Euro vs Japanese Yen" />
          <FieldLabel $width={104} htmlFor="period">Период:</FieldLabel>
          <ComboBox id="period" value="H1" width={90} />
          <Spacer $width={2} />
          <PushButton type="button">Свойства символа</PushButton>
        </FormRow>
        <FormRow>
          <FieldLabel $width={122} htmlFor="model">Модель:</FieldLabel>
          <ComboBox id="model" value="Все тики (наиболее точный метод на основе всех наименьших доступных таймфреймов для генерации каждого тика)" />
          <FieldLabel $width={104} htmlFor="spread">Спред:</FieldLabel>
          <ComboBox id="spread" value="Текущий" width={90} selected />
          <Spacer $width={2} />
          <PushButton type="button">Открыть график</PushButton>
        </FormRow>
        <FormRow>
          <FieldLabel $width={120} htmlFor="useDate">Использовать дату</FieldLabel>
          <Check id="useDate" type="checkbox" defaultChecked />
          <FieldLabel $width={96} htmlFor="from">От:</FieldLabel>
          <ComboBox id="from" value="2013.06.05" width={90} date />
          <FieldLabel $width={95} htmlFor="to">до:</FieldLabel>
          <ComboBox id="to" value="2014.03.09" width={90} date />
          <Spacer />
          <FieldLabel $width={80} htmlFor="optimize">Оптимизация</FieldLabel>
          <Check id="optimize" type="checkbox" />
          <Spacer $width={4} />
          <PushButton type="button">Изменить эксперта</PushButton>
        </FormRow>
        <FormRow>
          <FieldLabel $width={120} htmlFor="visual">Визуализация</FieldLabel>
          <Check id="visual" type="checkbox" defaultChecked />
          <Slider type="range" aria-label="Скорость" min="0" max="32" defaultValue="32" />
          <PushButton type="button" $width={25} aria-label="Пауза">
            <svg width="7" height="10" viewBox="0 0 7 10"><path d="M.5 0v10M6 0v10" stroke="#3d8fd8" /></svg>
          </PushButton>
          <Spacer $width={6} />
          <PushButton type="button" $width={120}>Пропустить до</PushButton>
          <Spacer $width={4} />
          <ComboBox id="skip" value="2014.03.09" width={90} date />
        </FormRow>
        <RunRow>
          <Progress role="progressbar" aria-label="Тестирование" aria-valuenow={19}>
            <ProgressFill style={{ width: "19%" }} />
          </Progress>
          <PushButton type="button" $strong>Старт</PushButton>
        </RunRow>
      </TesterForm>
      <TabStrip
        items={["Настройки", "Результаты", "График", "Отчет", "Журнал"]}
        active={0}
        pad={9}
        $inset={2}
      />
    </TesterBody>
  </Tester>
);

const App = () => (
  <>
    <GlobalStyle />
    <Page>
      <TitleBar>
        <svg width="16" height="18" viewBox="0 0 16 18" fill="none" strokeWidth="2" aria-hidden="true">
          <path d="M0 6c4 0 3-3 7-1s5-3 9-2" stroke="#e0281c" />
          <path d="M0 9c4 0 3-3 7-1s5-3 9-2" stroke="#f0761c" />
          <path d="M0 13c4 0 3-3 7-1s5-3 9-2" stroke="#d8d020" />
          <path d="M0 17c4 0 3-3 7-1s5-3 9-2" stroke="#3aa82c" />
        </svg>
        <h1>9499350: Alpari Limited MT4 - Демо Счет - [EURJPY,H1 (visual)]</h1>
        <WindowButtons>
          <WindowButton aria-label="Свернуть">
            <svg width="11" height="10" viewBox="0 0 11 10"><path d="M0 7h11" stroke="#eee" strokeWidth="3" /></svg>
          </WindowButton>
          <WindowButton aria-label="Развернуть">
            <svg width="12" height="11" viewBox="0 0 12 11" fill="none" stroke="#eee">
              <path d="M3.500 1.500v-1h8v7h-1" />
              <path d="M1 3h7v7H1z" strokeWidth="2" />
            </svg>
          </WindowButton>
          <WindowButton aria-label="Закрыть" $wide>
            <CloseGlyph size={10} color="#eee" />
          </WindowButton>
        </WindowButtons>
      </TitleBar>
      <MenuBar>
        <svg width="15" height="15" viewBox="0 0 15 15" fill="#fff" stroke="#3c80cc" aria-hidden="true">
          <path d="M.5 .5h10v8H.5zM4.500 5.500h10v9h-10z" />
          <path d="M1 2h9M5 7h9" />
          <path d="M6 9l1.500 3 1.500-3 1.500 3 2-2" fill="none" />
        </svg>
        <ul>
          {menu.map((item) => (
            <li key={item}><a href="#menu">{item}</a></li>
          ))}
        </ul>
        <MdiButton aria-label="Свернуть окно">
          <svg width="9" height="9" viewBox="0 0 9 9"><path d="M1 8h6" stroke="#77756b" strokeWidth="2" /></svg>
        </MdiButton>
        <MdiButton aria-label="Восстановить окно">
          <svg width="9" height="9" viewBox="0 0 9 9" fill="none" stroke="#77756b">
            <path d="M2.500 2.500v-2h6v5h-2M.5 3.500h6v5h-6zM0 4.500h7" />
          </svg>
        </MdiButton>
        <MdiButton aria-label="Закрыть окно">
          <CloseGlyph size={8} color="#77756b" />
        </MdiButton>
      </MenuBar>

      <ToolRow>
        <ToolGroup>
          <Grip />
          <Tool icon="newChart" title="Новый график" drop />
          <Tool icon="profiles" title="Профили" drop />
          <Separator />
          <Tool icon="marketWatch" title="Обзор рынка" on />
          <Tool icon="dataWindow" title="Окно данных" />
          <Tool icon="navigator" title="Навигатор" on />
          <Tool icon="terminal" title="Терминал" />
          <Tool icon="tester" title="Тестер стратегий" on />
          <Separator />
          <Tool icon="newOrder" label="Новый Ордер" />
          <Tool icon="metaEditor" title="MetaEditor" />
          <Tool icon="experts" label="Советники" on />
        </ToolGroup>
        <ToolGroup $divided>
          <Grip />
          <Tool icon="barChart" title="Бары" on />
          <Tool icon="candles" title="Свечи" />
          <Tool icon="lineChart" title="Линия" />
          <Separator />
          <Tool icon="zoomIn" title="Увеличить" />
          <Tool icon="zoomOut" title="Уменьшить" />
          <Separator />
          <Tool icon="autoScroll" title="Автопрокрутка" on />
          <Tool icon="chartShift" title="Сдвиг графика" on />
          <Separator />
          <Tool icon="indicators" title="Индикаторы" drop />
          <Tool icon="periods" title="Периоды" drop />
          <Tool icon="templates" title="Шаблоны" drop />
        </ToolGroup>
        <SearchBox>
          <SearchButton type="button" $width={22} aria-label="Настройки поиска">
            <svg width="14" height="14" viewBox="0 0 14 14" aria-hidden="true">
              <circle cx="7" cy="7" r="5.800" fill="none" stroke="#1f5fc4" strokeWidth="2" strokeDasharray="2.300 1.340" />
              <circle cx="7" cy="7" r="3.700" fill="#cfe4ff" stroke="#3f86e0" strokeWidth="3" />
              <circle cx="7" cy="7" r="1.500" fill="#fff" />
            </svg>
          </SearchButton>
          <input type="text" aria-label="Поиск" />
          <SearchButton type="button" $width={16} aria-label="История"><DownTriangle /></SearchButton>
          <SearchButton type="submit" $width={22} aria-label="Искать">
            <svg width="14" height="14" viewBox="0 0 14 14" fill="none" aria-hidden="true">
              <path d="M6 8l-5 5" stroke="#2456b8" strokeWidth="2.500" />
              <circle cx="9" cy="5" r="3.800" fill="#fff" stroke="#2f6fd0" strokeWidth="1.500" />
            </svg>
          </SearchButton>
          <SearchButton type="button" $width={29} aria-label="Сообщения">
            <svg width="17" height="16" viewBox="0 0 17 16" aria-hidden="true">
              <path d="M0 0h17v12H8l-1 4-3-4H0z" fill="#6a86b8" />
              <text x="8" y="10" textAnchor="middle" fontSize="10" fontWeight="700" fill="#fff">4</text>
            </svg>
          </SearchButton>
        </SearchBox>
      </ToolRow>

      <ToolRow $last>
        <ToolGroup>
          <Grip />
          <Tool icon="cursor" title="Курсор" on />
          <Tool icon="crosshair" title="Перекрестие" />
          <Separator />
          <Tool icon="vline" title="Вертикальная линия" />
          <Tool icon="hline" title="Горизонтальная линия" />
          <Tool icon="trend" title="Трендовая линия" />
          <Tool title="Канал"><ChannelIcon /></Tool>
          <Tool title="Фибоначчи"><FiboIcon /></Tool>
          <Tool title="Текст"><Letter>A</Letter></Tool>
          <Tool title="Метка"><LabelIcon /></Tool>
          <Tool icon="shapes" title="Стрелки" drop />
        </ToolGroup>
        <ToolGroup>
          <Grip />
          {timeframes.map((frame) => (
            <ToolButton key={frame} type="button" $muted $on={frame === "H1"}>
              {frame}
            </ToolButton>
          ))}
        </ToolGroup>
      </ToolRow>

      <Main>
        <Side>
          <MarketWatch />
          <Navigator />
        </Side>
        <ChartWindow />
      </Main>

      <StrategyTester />

      <StatusBar>
        <p>Для справки, нажмите F1</p>
        <StatusCell $width={120}>Default</StatusCell>
        <StatusCell $width={115}>2013.06.05 07:00</StatusCell>
        <StatusCell $width={76}>O: 130.902</StatusCell>
        <StatusCell $width={76}>H: 130.983</StatusCell>
        <StatusCell $width={74}>L: 130.422</StatusCell>
        <StatusCell $width={75}>C: 130.476</StatusCell>
        <StatusCell $width={71}>V: 6267</StatusCell>
        <Traffic $width={162}>
          <svg width="24" height="12" viewBox="0 0 24 12" shapeRendering="crispEdges" aria-hidden="true">
            {[...Array(8)].map((_, i) => (
              <g key={i}>
                <rect x={i * 3} y="0" width="2" height={9 - i} fill="#6b8e00" />
                <rect x={i * 3} y={10 - i} width="2" height={2 + i} fill="#0b3a5c" />
              </g>
            ))}
          </svg>
          74/1 kb
        </Traffic>
      </StatusBar>
    </Page>
  </>
);

export default App;
